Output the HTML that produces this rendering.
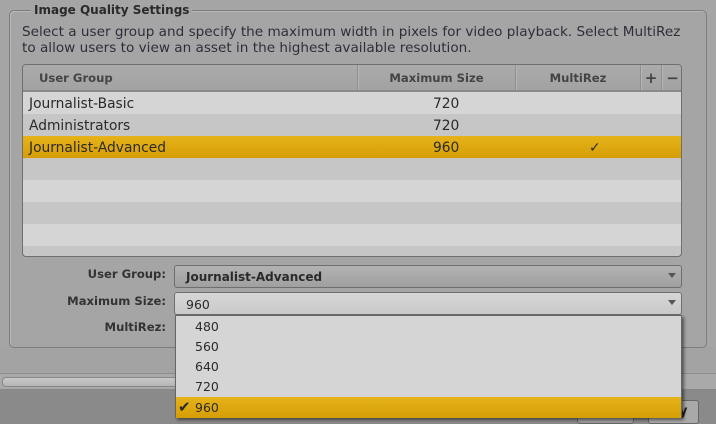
<!DOCTYPE html>
<html><head><style>
*{box-sizing:border-box;margin:0;padding:0}
body{width:716px;height:424px;overflow:hidden;background:#a5a5a5;font-family:"DejaVu Sans","Liberation Sans",sans-serif;font-size:12.5px;color:#2a2a2a;position:relative}
.abs{position:absolute}
.fs{left:9px;top:10px;width:698px;height:338px;border:1px solid #7d7d7d;border-radius:5px;box-shadow:inset 1px 1px 0 #b8b8b8}
.legend{left:31px;top:3px;background:#a5a5a5;padding:0 3px;font-weight:bold;font-size:12px;color:#2a2a2a}
.desc{left:22px;top:24px;font-size:13.6px;line-height:16px;color:#2e2e3a;width:694px;white-space:nowrap}
.tbl{left:22px;top:64px;width:660px;height:193px;border:1px solid #6f6f6f;border-radius:4px;overflow:hidden;background:#c6c6c6}
.hdr{left:0;top:0;width:660px;height:27px;background:linear-gradient(#ababab,#a2a2a2);border-bottom:2px solid #8a8a8a;font-weight:bold;color:#444;font-size:11.6px}
.hc{position:absolute;top:0;height:25px;line-height:26px;border-right:1px solid #8f8f8f;box-shadow:1px 0 0 #b5b5b5}
.row{position:absolute;left:0;width:660px;height:22px;line-height:24px;font-size:13.8px}
.l{background:#d5d5d5}.d{background:#c6c6c6}
.sel{background:linear-gradient(#e6b21a,#d69e05)}
.lbl{font-weight:bold;color:#333;text-align:right;width:160px;left:6px;font-size:11.6px;line-height:16px}
.dd{left:174px;width:508px;height:23px;border:1px solid #6e6e6e;border-radius:3px;line-height:23px;padding-left:11px;font-size:13px}
.arr{position:absolute;right:5px;top:7px;width:0;height:0;border-left:4px solid transparent;border-right:4px solid transparent;border-top:5px solid #555}
.list{left:175px;top:315px;width:507px;height:103px;background:#d5d5d5;border:1px solid #666;box-shadow:2px 2px 3px rgba(0,0,0,.5)}
.it{position:absolute;left:0;width:505px;height:20px;line-height:21px;padding-left:19px;font-size:12.5px}
</style></head><body>
<div class="abs" style="left:0;top:347px;width:716px;height:26px;background:#a3a3a3"></div>
<div class="abs" style="left:0;top:373px;width:716px;height:17px;background:#a9a9a9;border-top:1px solid #8c8c8c;border-bottom:1px solid #888"></div>
<div class="abs" style="left:2px;top:377px;width:180px;height:10px;border-radius:4px;background:linear-gradient(#c8c8c8,#b5b5b5);border:1px solid #888"></div>
<div class="abs" style="left:0;top:390px;width:716px;height:34px;background:#8a8a8a"></div>
<div class="abs" style="left:577px;top:400px;width:57px;height:24px;border:1px solid #666;border-radius:3px;background:#9d9d9d"></div>
<div class="abs" style="left:648px;top:400px;width:51px;height:24px;border:1px solid #666;border-radius:3px;background:#a9a9a9;font-weight:bold;font-size:13px;line-height:22px;padding-left:30px;color:#222">y</div>

<div class="abs fs"></div>
<div class="abs legend">Image Quality Settings</div>
<div class="abs desc">Select a user group and specify the maximum width in pixels for video playback. Select MultiRez<br>to allow users to view an asset in the highest available resolution.</div>

<div class="abs tbl">
 <div class="abs hdr">
  <div class="hc" style="left:0;width:335px;padding-left:16px">User Group</div>
  <div class="hc" style="left:335px;width:158px;text-align:center">Maximum Size</div>
  <div class="hc" style="left:493px;width:125px;text-align:center">MultiRez</div>
  <div class="hc" style="left:618px;width:21px;text-align:center;font-size:15px">+</div>
  <div class="hc" style="left:639px;width:21px;text-align:center;font-size:15px;border:none">−</div>
 </div>
 <div class="row l" style="top:27px"><span style="margin-left:6px">Journalist-Basic</span><span class="abs" style="left:410px">720</span></div>
 <div class="row d" style="top:49px"><span style="margin-left:6px">Administrators</span><span class="abs" style="left:410px">720</span></div>
 <div class="row sel" style="top:71px"><span style="margin-left:6px">Journalist-Advanced</span><span class="abs" style="left:410px">960</span><span class="abs" style="left:566px">✓</span></div>
 <div class="row d" style="top:93px"></div>
 <div class="row l" style="top:115px"></div>
 <div class="row d" style="top:137px"></div>
 <div class="row l" style="top:159px"></div>
</div>

<div class="abs lbl" style="top:266px">User Group:</div>
<div class="abs dd" style="top:265px;background:linear-gradient(#b2b2b2,#a0a0a0);font-weight:bold;font-size:12px">Journalist-Advanced<div class="arr"></div></div>
<div class="abs lbl" style="top:293px">Maximum Size:</div>
<div class="abs dd" style="top:292px;background:linear-gradient(#d6d6d6,#cacaca);font-size:12.5px">960<div class="arr"></div></div>
<div class="abs lbl" style="top:319px">MultiRez:</div>

<div class="abs list">
 <div class="it" style="top:0">480</div>
 <div class="it" style="top:20px">560</div>
 <div class="it" style="top:40px">640</div>
 <div class="it" style="top:60px">720</div>
 <div class="it sel" style="top:81px;height:21px"><span class="abs" style="left:2px;font-size:15px;line-height:21px">✔</span>960</div>
</div>
</body></html>
